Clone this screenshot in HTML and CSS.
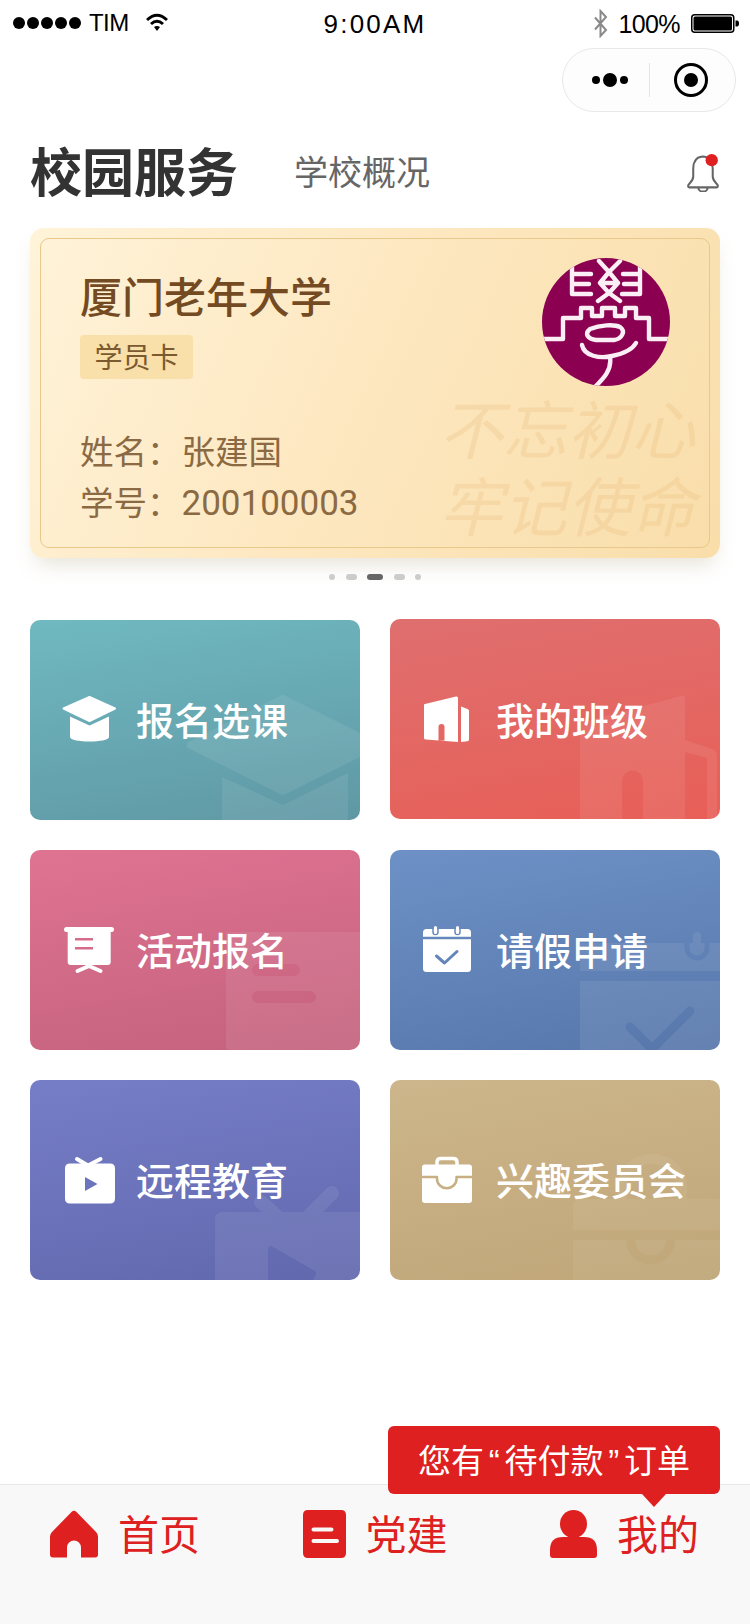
FILE: index.html
```html
<!DOCTYPE html>
<html lang="zh-CN">
<head>
<meta charset="utf-8">
<title>校园服务</title>
<link rel="stylesheet" href="styles.css">
</head>
<body>
<div class="page">
  <div class="status">
    <div class="status-left">
      <div class="signal"><i></i><i></i><i></i><i></i><i></i></div>
      <span class="carrier">TIM</span>
      <svg class="wifi" viewBox="0 0 22 18"><path class="wifi-arc" d="M1 7Q11-2.500 21 7"/><path class="wifi-arc" d="M5 11Q11 5.500 17 11"/><path class="wifi-dot" d="M8 14Q11 12 14 14L11 18Z"/></svg>
    </div>
    <div class="time">9:00AM</div>
    <div class="status-right">
      <svg class="bt" viewBox="0 0 15 29"><path d="M2 8.500 13 21 7.500 27V2L13 8 2 20.500"/></svg>
      <span class="pct">100%</span>
      <svg class="batt" viewBox="0 0 48 19"><rect class="batt-shell" x=".75" y=".75" width="42" height="17.500" rx="3"/><rect x="2.500" y="2.500" width="38.500" height="14" rx="1.500"/><path d="M44.500 6.500h1.500a2 3 0 0 1 0 6h-1.500z"/></svg>
    </div>
  </div>

  <div class="capsule-row">
    <div class="capsule">
      <div class="more"><i></i><b></b><i></i></div>
      <span class="cap-div"></span>
      <div class="record"><i></i></div>
    </div>
  </div>

  <header class="head">
    <h1 class="head-title">校园服务</h1>
    <span class="head-sub">学校概况</span>
    <svg class="bell" viewBox="0 0 34 38"><path class="bell-line" d="M16 3.500C9 4 7 10 7 15v8c0 5-5 7-5 9 0 1 .5 1.500 1.500 1.500h26c1 0 1.500-.5 1.500-1.500 0-2-5-4-5-9v-8c0-5-3-11.500-10-11.500zM12 34a4.500 3.500 0 0 0 9 0"/><circle class="bell-dot" cx="25" cy="7" r="6"/></svg>
  </header>

  <section class="card">
    <div class="card-inner">
      <h2 class="school">厦门老年大学</h2>
      <span class="badge">学员卡</span>
      <div class="info first"><span class="label">姓名：</span><span>张建国</span></div>
      <div class="info"><span class="label">学号：</span><span class="num">200100003</span></div>
      <div class="motto"><div>不忘初心</div><div>牢记使命</div></div>
      <svg class="seal" viewBox="0 0 128 128">
        <defs><clipPath id="seal-clip"><circle cx="64" cy="64" r="64"/></clipPath></defs>
        <g clip-path="url(#seal-clip)">
          <rect class="seal-bg" width="128" height="128"/>
          <g class="seal-ink">
            <path d="M30 2V36H49M30 16H49M30 26H47"/>
            <path d="M98 2V36H80M98 16H81M98 26H82"/>
            <path d="M57 3 67 14 78 3M67 14 76 25 67 35 58 25ZM56 43 67 35 78 43M58 25H76"/>
            <path d="M-2 81H21V60H39V50H50V58H60V50H73V58H83V50H94V60H107V81H130"/>
            <path d="M48 71C58 67 72 66 78 69 84 73 80 81 72 82H54C46 81 42 76 48 71"/>
            <path d="M40 87C42 98 58 101 70 98 80 96 90 92 94 85"/>
            <path d="M68 99C70 112 62 120 52 130"/>
          </g>
        </g>
      </svg>
    </div>
  </section>

  <div class="pager"><i class="end"></i><i></i><i class="on"></i><i></i><i class="end"></i></div>

  <main class="grid">
    <a class="tile teal">
      <svg class="wm" viewBox="0 0 330 200"><path class="wm-join" d="M161 125 253 79 345 125 253 171Z"/><path d="M192 157 253 185 318 153V200H192Z"/></svg>
      <svg class="ico" viewBox="0 0 54 48"><path class="ico-join" d="M1.500 12.500 27.500 1 53 12.500 27.500 25Z"/><path d="M8 20.500 27.500 29.500 47 20.500V41C47 47 8 47 8 41Z"/></svg>
      <span class="tile-text">报名选课</span>
    </a>
    <a class="tile red up">
      <svg class="wm" viewBox="0 0 330 200"><path d="M190 104 291 77Q295 76 295 80V200H190ZM232 200H253V162A10.500 10.500 0 0 0 232 162Z" fill-rule="evenodd"/><path d="M295 121 322 130Q327 132 327 138V200H317V139L295 133Z"/></svg>
      <svg class="ico" viewBox="0 0 54 48"><path d="M3 8 34 .5Q36 0 36 2V46L4 43.500Q2 43.500 2 42V9Q2 8 3 8ZM16.500 44.500H22.500V31A3 3 0 0 0 16.500 31Z" fill-rule="evenodd"/><path d="M39 10.500 45.500 13Q47 13.500 47 15V43.500Q47 45 45.500 45.300L39 46Z"/></svg>
      <span class="tile-text">我的班级</span>
    </a>
    <a class="tile pink">
      <svg class="wm" viewBox="0 0 330 200"><path fill-rule="evenodd" d="M196 82H330V200H200Q196 200 196 196ZM228 114H264A6 6 0 0 1 264 126H228A6 6 0 0 1 228 114ZM228 141H280A6 6 0 0 1 280 153H228A6 6 0 0 1 228 141Z"/></svg>
      <svg class="ico" viewBox="0 0 54 48"><rect x="2" y="1" width="50" height="5" rx="2.500"/><path fill-rule="evenodd" d="M5.700 5H48.700V36Q48.700 39 45.700 39H8.700Q5.700 39 5.700 36ZM13 12H31V14.500H13ZM13 21H31V23.500H13Z"/><path class="leg" d="M15.500 45 27 40 38.500 45"/></svg>
      <span class="tile-text">活动报名</span>
    </a>
    <a class="tile blue">
      <svg class="wm" viewBox="0 0 330 200">
        <defs><mask id="m-cal-big" maskUnits="userSpaceOnUse" x="0" y="0" width="330" height="200"><rect width="330" height="200" fill="#fff"/><path class="cut" d="M240 177 262 199 300 161" stroke-width="9"/><path class="cut" d="M297 92V98A10 10 0 0 0 317 98V92" stroke-width="5"/></mask></defs>
        <g mask="url(#m-cal-big)"><rect x="190" y="93" width="140" height="28"/><rect x="190" y="131" width="140" height="69"/><rect x="303" y="82" width="8" height="19" rx="4"/></g>
      </svg>
      <svg class="ico" viewBox="0 0 54 48">
        <defs><mask id="m-cal" maskUnits="userSpaceOnUse" x="0" y="0" width="54" height="48"><rect width="54" height="48" fill="#fff"/><path class="cut" d="M14.500 30 22.500 37 35 25.500" stroke-width="3"/><path class="cut" d="M0 12H54" stroke-width="2.500"/><path class="cut" d="M11 3V6A2.500 2.500 0 0 0 16 6V3M33 3V6A2.500 2.500 0 0 0 38 6V3" stroke-width="1.500"/></mask></defs>
        <g mask="url(#m-cal)"><rect x="1" y="3" width="48" height="43" rx="3.500"/></g>
        <rect x="12" y="0" width="3" height="8" rx="1.500"/><rect x="34" y="0" width="3" height="8" rx="1.500"/>
      </svg>
      <span class="tile-text">请假申请</span>
    </a>
    <a class="tile violet">
      <svg class="wm" viewBox="0 0 330 200"><path class="leg big" d="M231 122 251 140M302 113 279 136"/><path fill-rule="evenodd" d="M193 132H330V200H185V140Q185 132 193 132ZM238 170 238 200H283L285 196Q288 192 283 190L243 167Q238 164 238 170Z"/></svg>
      <svg class="ico" viewBox="0 0 54 48"><path class="leg" d="M15 3 26 9.500 38.500 3"/><path fill-rule="evenodd" d="M8 7.500H48Q53 7.500 53 12.500V42.500Q53 47.500 48 47.500H8Q3 47.500 3 42.500V12.500Q3 7.500 8 7.500ZM23 21V35L35.500 28Z"/></svg>
      <span class="tile-text">远程教育</span>
    </a>
    <a class="tile gold">
      <svg class="wm" viewBox="0 0 330 200">
        <defs><mask id="m-brief-big" maskUnits="userSpaceOnUse" x="0" y="0" width="330" height="200"><rect width="330" height="200" fill="#fff"/><path class="cut" d="M240.500 155V160A20 20 0 0 0 280.500 160V155" stroke-width="9"/></mask></defs>
        <g mask="url(#m-brief-big)"><path d="M191 119H330V150H183V127Q183 119 191 119ZM183 160H330V200H183Z"/></g>
        <path class="handle" d="M232 119V108C232 88 248 79 262 79 276 79 292 88 292 108V119"/>
      </svg>
      <svg class="ico" viewBox="0 0 54 48">
        <defs><mask id="m-brief" maskUnits="userSpaceOnUse" x="0" y="0" width="54" height="48"><rect width="54" height="48" fill="#fff"/><path class="cut" d="M0 21H15V23A9.500 9 0 0 0 34.500 23V21H54" stroke-width="2.500"/></mask></defs>
        <g mask="url(#m-brief)"><rect x="0" y="8.500" width="50" height="38.500" rx="3"/></g>
        <path class="handle" d="M15 9V6Q15 2.500 19 2.500H31Q35 2.500 35 6V9"/>
      </svg>
      <span class="tile-text">兴趣委员会</span>
    </a>
  </main>

  <footer class="tabs">
    <div class="tooltip"><span>您有<span class="q">“</span>待付款<span class="q">”</span>订单</span></div>
    <div class="tab">
      <svg class="tab-ico home" viewBox="0 0 48 47"><path d="M21.500 1.500Q24-1 26.500 1.500L46 21.500Q48 23.500 48 26V44Q48 47 45 47H31V37A7 7 0 0 0 17 37V47H3Q0 47 0 44V26Q0 23.500 2 21.500Z"/></svg>
      <span class="tab-text">首页</span>
    </div>
    <div class="tab">
      <svg class="tab-ico party" viewBox="0 0 43 48"><path fill-rule="evenodd" d="M5 0H38Q43 0 43 5V43Q43 48 38 48H5Q0 48 0 43V5Q0 0 5 0ZM10.500 17.500A2 2 0 0 0 10.500 21.500H28.500A2 2 0 0 0 28.500 17.500ZM10.500 29A2 2 0 0 0 10.500 33H34A2 2 0 0 0 34 29Z"/></svg>
      <span class="tab-text">党建</span>
    </div>
    <div class="tab">
      <svg class="tab-ico person" viewBox="0 0 47 48"><ellipse cx="23.500" cy="14" rx="13.500" ry="14"/><path d="M0 45V40Q0 27 13 27H34Q47 27 47 40V45Q47 48 44 48H3Q0 48 0 45Z"/></svg>
      <span class="tab-text">我的</span>
    </div>
  </footer>
</div>
</body>
</html>
```

FILE: styles.css
```css
* { box-sizing: border-box; }
html, body { margin: 0; padding: 0; background: #fff; }
body { font-family: "Noto Sans CJK SC", sans-serif; color: #333; }
h1, h2 { margin: 0; }

.page { width: 750px; height: 1624px; display: flex; flex-direction: column; overflow: hidden; position: relative; }

/* status bar */
.status { height: 48px; display: grid; grid-template-columns: 1fr auto 1fr; align-items: center; font-family: "Liberation Sans", sans-serif; color: #000; padding: 0 11px 2px 13px; }
.status-left { display: flex; align-items: center; }
.signal { display: flex; gap: 2px; }
.signal i { width: 12px; height: 12px; border-radius: 50%; background: #000; }
.carrier { font-size: 24px; margin-left: 8px; letter-spacing: -.6px; }
.wifi { width: 22px; height: 18px; margin-left: 17px; margin-top: -2px; }
.wifi-arc { fill: none; stroke: #000; stroke-width: 3; }
.wifi-dot { fill: #000; }
.time { font-size: 26px; letter-spacing: 2.200px; margin-left: -2px; margin-top: 2px; }
.status-right { display: flex; align-items: center; justify-content: flex-end; }
.bt { width: 15px; height: 29px; }
.bt path { fill: none; stroke: #8a8a8a; stroke-width: 2; }
.pct { font-size: 25px; margin-left: 10px; letter-spacing: -.6px; margin-top: 2px; }
.batt { width: 48px; height: 19px; margin-left: 11px; }
.batt-shell { fill: #fff; stroke: #000; stroke-width: 1.5; }

/* capsule */
.capsule-row { display: flex; justify-content: flex-end; padding-right: 14px; }
.capsule { width: 174px; height: 64px; border: 1px solid #e8e8e8; border-radius: 32px; background: #fdfdfd; display: flex; align-items: center; padding-left: 29px; }
.more { display: flex; align-items: center; gap: 3px; }
.more i { width: 8px; height: 8px; border-radius: 50%; background: #000; }
.more b { width: 14px; height: 14px; border-radius: 50%; background: #000; }
.cap-div { width: 1px; height: 34px; background: #e4e4e4; margin-left: 21px; }
.record { width: 34px; height: 34px; border: 3.5px solid #000; border-radius: 50%; margin-left: 24px; display: flex; align-items: center; justify-content: center; }
.record i { width: 14px; height: 14px; border-radius: 50%; background: #000; }

/* header */
.head { display: flex; align-items: center; height: 72px; margin-top: 22px; margin-bottom: 22px; padding: 0 29px 0 30px; }
.head-title { font-size: 52px; line-height: 72px; font-weight: 700; color: #333; }
.head-sub { font-size: 34px; color: #666; margin-left: 56px; }
.bell { width: 35px; height: 39px; margin-left: auto; margin-top: 4px; }
.bell-line { fill: none; stroke: #666; stroke-width: 2; }
.bell-dot { fill: #e01f20; }

/* id card */
.card { margin: 0 30px; height: 330px; padding: 10px; border-radius: 14px; background: linear-gradient(115deg, #fff3d9 0%, #fde7bf 50%, #f9deaa 100%); box-shadow: 0 12px 20px -6px rgba(170, 150, 110, .28); }
.card-inner { position: relative; height: 310px; border: 1px solid #e9c98b; border-radius: 9px; padding: 31px 0 0 39px; }
.school { font-size: 42px; line-height: 50px; font-weight: 500; color: #734a22; }
.badge { display: block; width: 113px; height: 44px; margin-top: 15px; border-radius: 4px; background: #f9dfa9; color: #7a5a2e; font-size: 28px; line-height: 42px; text-align: center; }
.info { display: flex; align-items: baseline; width: fit-content; font-size: 33.500px; line-height: 51px; color: #8b6a43; white-space: nowrap; }
.info.first { margin-top: 45px; }
.label { width: 101.500px; }
.num { font-family: Roboto, sans-serif; font-size: 35px; }
.motto { position: absolute; left: 398px; top: 149px; font-size: 64px; line-height: 77px; font-style: italic; color: rgba(226, 178, 110, .22); white-space: nowrap; }
.seal { position: absolute; left: 501px; top: 19px; width: 128px; height: 128px; }
.seal-bg { fill: #8b0050; }
.seal-ink { fill: none; stroke: #fbeef5; stroke-width: 4.400; stroke-linecap: round; stroke-linejoin: round; }

/* pager */
.pager { display: flex; justify-content: center; gap: 10.500px; margin-top: 16px; height: 6px; }
.pager i { width: 11px; height: 6px; border-radius: 3px; background: #ccc; }
.pager i.end { width: 6px; }
.pager i.on { width: 16px; background: #666; }

/* grid */
.grid { display: grid; grid-template-columns: 330px 330px; gap: 30px; padding: 0 30px; margin-top: 40px; }
.tile { position: relative; height: 200px; border-radius: 10px; overflow: hidden; display: flex; align-items: center; gap: 20px; padding-left: 32px; color: #fff; }
.tile.up { margin-top: -1px; margin-bottom: 1px; padding-top: 2px; }
.teal { background: linear-gradient(170deg, #70b9c1, #5f98a4); }
.red { background: linear-gradient(170deg, #df6f6f, #e85f57); }
.pink { background: linear-gradient(170deg, #df7392, #c4627d); }
.blue { background: linear-gradient(170deg, #6d91c6, #5777ab); }
.violet { background: linear-gradient(170deg, #767ec8, #6168ad); }
.gold { background: linear-gradient(170deg, #cdb68b, #c0a679); }
.wm { position: absolute; inset: 0; width: 100%; height: 100%; fill: #fff; opacity: .08; }
.gold .wm { opacity: .06; }
.wm-join { stroke: #fff; stroke-width: 8; stroke-linejoin: round; }
.ico { position: relative; width: 54px; height: 48px; flex: none; fill: #fff; overflow: visible; }
.ico-join { stroke: #fff; stroke-width: 2; stroke-linejoin: round; }
.leg { fill: none; stroke: #fff; stroke-width: 4; stroke-linecap: round; stroke-linejoin: round; }
.leg.big { stroke-width: 14; }
.handle { fill: none; stroke: #fff; stroke-width: 3.500; }
.wm .handle { stroke-width: 10; }
.cut { fill: none; stroke: #000; stroke-linecap: round; stroke-linejoin: round; }
.tile-text { position: relative; font-size: 38px; font-weight: 500; white-space: nowrap; margin-bottom: 4px; }

/* tab bar */
.tabs { position: relative; margin-top: auto; height: 140px; background: #f8f8f8; border-top: 1px solid #e8e8e8; display: flex; justify-content: space-between; align-items: flex-start; padding: 25px 51px 0 50px; }
.tab { display: flex; align-items: center; gap: 20px; color: #df2020; font-size: 41px; line-height: 48px; }
.tab-text { line-height: 44px; margin-bottom: 4px; }
.tab-ico { height: 48px; flex: none; fill: #df2020; }
.home { width: 48px; }
.party { width: 43px; }
.person { width: 47px; }
.tooltip { position: absolute; left: 388px; top: -59px; width: 332px; height: 68px; display: flex; align-items: center; justify-content: center; padding-bottom: 2px; background: #df2020; border-radius: 6px; color: #fff; font-size: 33px; white-space: nowrap; }
.tooltip::after { content: ""; position: absolute; left: 254px; top: 68px; border-style: solid; border-width: 13px 12.500px 0; border-color: #df2020 transparent transparent; }
.q { display: inline-block; width: 20.500px; text-align: center; font-family: "Liberation Sans", sans-serif; }
```
